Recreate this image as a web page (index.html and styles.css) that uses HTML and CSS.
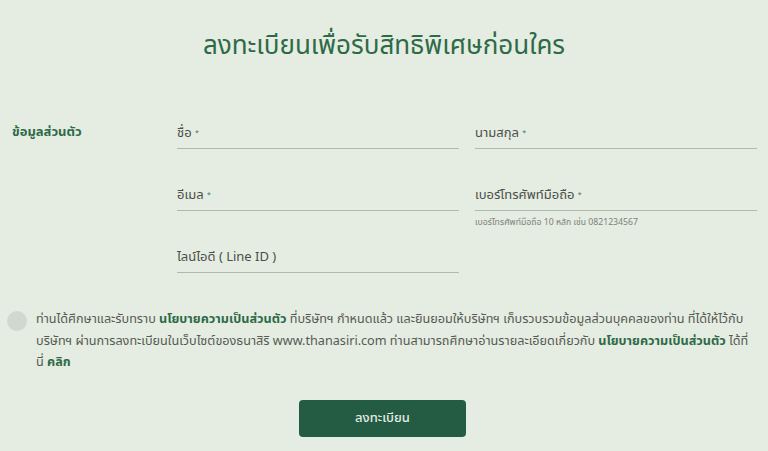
FILE: index.html
```html
<!DOCTYPE html>
<html lang="th">
<head>
<meta charset="utf-8">
<title>ลงทะเบียน</title>
<link rel="stylesheet" href="styles.css">
</head>
<body>
<main class="page">
  <h1 class="title">ลงทะเบียนเพื่อรับสิทธิพิเศษก่อนใคร</h1>
  <section class="personal">
    <div class="section-label">ข้อมูลส่วนตัว</div>
    <div class="fields">
      <div class="field">
        <div class="label">ชื่อ <span class="req">*</span></div>
        <div class="line"></div>
      </div>
      <div class="field">
        <div class="label">นามสกุล <span class="req">*</span></div>
        <div class="line"></div>
      </div>
      <div class="field">
        <div class="label">อีเมล <span class="req">*</span></div>
        <div class="line"></div>
      </div>
      <div class="field">
        <div class="label">เบอร์โทรศัพท์มือถือ <span class="req">*</span></div>
        <div class="line"></div>
        <div class="hint">เบอร์โทรศัพท์มือถือ 10 หลัก เช่น 0821234567</div>
      </div>
      <div class="field">
        <div class="label">ไลน์ไอดี ( Line ID )</div>
        <div class="line"></div>
      </div>
    </div>
  </section>
  <section class="consent">
    <span class="check"></span>
    <p class="consent-text">ท่านได้ศึกษาและรับทราบ <b>นโยบายความเป็นส่วนตัว</b> ที่บริษัทฯ กำหนดแล้ว และยินยอมให้บริษัทฯ เก็บรวบรวมข้อมูลส่วนบุคคลของท่าน ที่ได้ให้ไว้กับ<br>บริษัทฯ ผ่านการลงทะเบียนในเว็บไซต์ของธนาสิริ www.thanasiri.com ท่านสามารถศึกษาอ่านรายละเอียดเกี่ยวกับ <b>นโยบายความเป็นส่วนตัว</b> ได้ที่<br>นี่ <b>คลิก</b></p>
  </section>
  <div class="actions">
    <button class="submit" type="button">ลงทะเบียน</button>
  </div>
</main>
</body>
</html>
```

FILE: styles.css
```css
html, body {
  margin: 0;
  padding: 0;
}
body {
  background: #e5ece1;
  font-family: "Noto Sans Thai", "Noto Sans", "DejaVu Sans", sans-serif;
  color: #555a55;
}
.page {
  width: 768px;
  height: 451px;
  overflow: hidden;
}
.title {
  margin: 0;
  padding-top: 30px;
  text-align: center;
  font-size: 26px;
  line-height: 32px;
  font-weight: 400;
  color: #2e6a48;
  height: 90px;
  box-sizing: border-box;
}
.personal {
  display: flex;
  padding: 31px 11px 0 12px;
}
.section-label {
  width: 165px;
  padding-top: 2px;
  font-size: 13px;
  font-weight: 700;
  color: #2d6a48;
  line-height: 18px;
}
.fields {
  flex: 1;
  display: grid;
  grid-template-columns: 1fr 1fr;
  column-gap: 16px;
  row-gap: 26px;
}
.field {
  height: 36px;
}
.label {
  font-size: 13px;
  line-height: 18px;
  height: 24px;
  padding-top: 3px;
  color: #4a4f4a;
}
.req {
  color: #3c7a58;
  font-size: 7px;
  vertical-align: 2px;
}
.line {
  height: 1px;
  background: #b3b8ae;
}
.hint {
  font-size: 8.7px;
  line-height: 12px;
  color: #7c817b;
  margin-top: 6px;
}
.consent {
  display: flex;
  gap: 9px;
  padding: 28px 11px 0 7px;
}
.check {
  flex: none;
  width: 20px;
  height: 20px;
  border-radius: 50%;
  background: #d2d8cf;
  margin-top: 2px;
}
.consent-text {
  margin: 0;
  font-size: 12.65px;
  line-height: 21.5px;
  color: #555a55;
  white-space: nowrap;
}
.consent-text b {
  color: #2d6a48;
}
.actions {
  display: flex;
  justify-content: center;
  padding-top: 26px;
}
.submit {
  width: 167px;
  height: 37px;
  margin-right: 3px;
  border: none;
  border-radius: 4px;
  background: #245c43;
  color: #e3ebe5;
  font-family: inherit;
  font-size: 13px;
  font-weight: 500;
}
```
